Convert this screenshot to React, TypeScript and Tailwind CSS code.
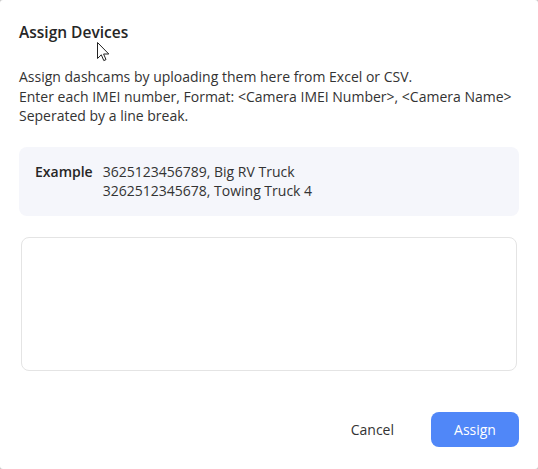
import React from "react";

export default function App() {
  return (
    <div className="w-[538px] h-[469px] bg-[#c8c8c8]" style={{ fontFamily: '"Open Sans", "Liberation Sans", sans-serif' }}>
      <div className="relative w-full h-full bg-white rounded-[3px] flex flex-col pl-[19px] pr-[19px] pt-[20px] text-[#333333]">
        <h2 className="text-[15.5px] leading-[24px] font-semibold text-[#262626]">Assign Devices</h2>
        <div className="mt-[23px] text-[14px] leading-[19.6px]">
          <p>Assign dashcams by uploading them here from Excel or CSV.</p>
          <p>Enter each IMEI number, Format: &lt;Camera IMEI Number&gt;, &lt;Camera Name&gt;</p>
          <p>Seperated by a line break.</p>
        </div>
        <div className="mt-[21px] h-[69px] rounded-[8px] bg-[#f5f6fb] flex items-start gap-[10px] pl-[16px] pt-[15px] text-[14px] leading-[19.5px]">
          <span className="font-semibold text-[#262626]">Example</span>
          <div>
            <div>3625123456789, Big RV Truck</div>
            <div>3262512345678, Towing Truck 4</div>
          </div>
        </div>
        <textarea className="mt-[21px] mx-[2px] h-[134px] rounded-[8px] border border-[#e4e4e4] resize-none outline-none p-3 text-[14px]" />
        <div className="mt-[41px] flex justify-end items-center gap-[21px]">
          <button className="h-[35px] px-4 text-[14px] text-[#333333]">Cancel</button>
          <button className="h-[35px] w-[88px] rounded-[8px] bg-[#5087f8] text-white text-[14px] font-medium">Assign</button>
        </div>
        <svg className="absolute left-[97px] top-[42px]" width="13" height="20" viewBox="0 0 13 20">
          <path d="M0.5 0.5 L0.5 16.5 L4.3 12.8 L6.8 18.6 L9 17.6 L6.6 12 L11.8 12 Z" fill="white" stroke="#222" strokeWidth="1" strokeLinejoin="miter" />
        </svg>
      </div>
    </div>
  );
}
